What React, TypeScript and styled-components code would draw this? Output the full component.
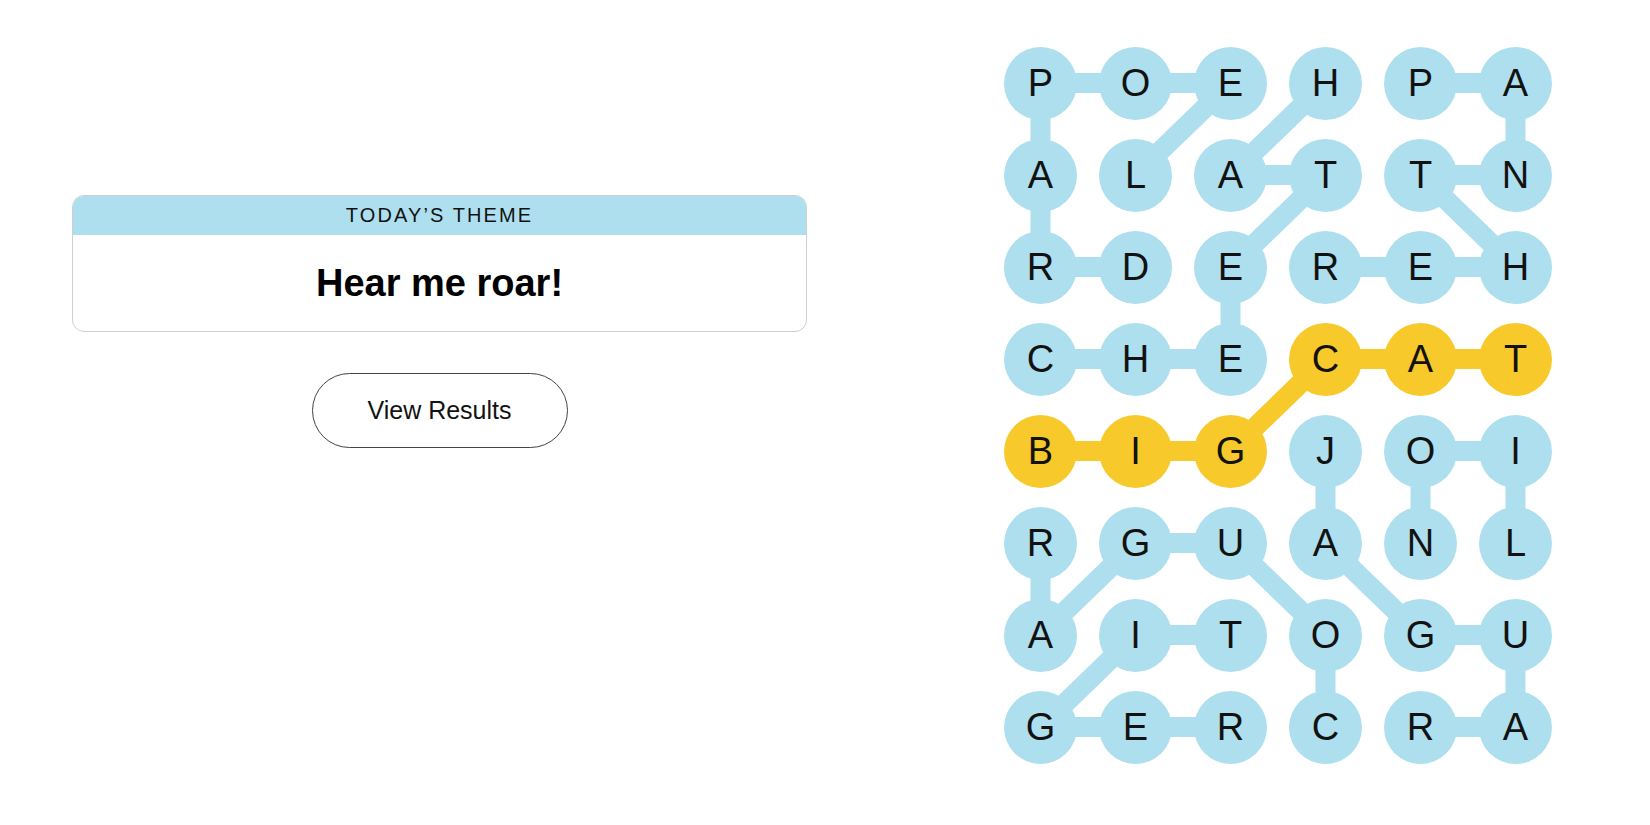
import React from "react";
import styled, { createGlobalStyle } from "styled-components";

const GlobalStyle = createGlobalStyle`
  html, body { margin: 0; padding: 0; background: #ffffff; }
  body { font-family: "Liberation Sans", Arial, sans-serif; color: #121212; }
`;

const COL_W = 95;
const ROW_H = 92;
const BLUE = "#aedfee";
const YELLOW = "#f7c92a";

const GRID = ["POEHPA", "ALATTN", "RDEREH", "CHECAT", "BIGJOI", "RGUANL", "AITOGU", "GERCRA"];

type Cell = [number, number];
interface Word { name: string; path: Cell[]; spangram?: boolean }

const WORDS: Word[] = [
  { name: "LEOPARD", path: [[1, 1], [0, 2], [0, 1], [0, 0], [1, 0], [2, 0], [2, 1]] },
  { name: "CHEETAH", path: [[3, 0], [3, 1], [3, 2], [2, 2], [1, 3], [1, 2], [0, 3]] },
  { name: "PANTHER", path: [[0, 4], [0, 5], [1, 5], [1, 4], [2, 5], [2, 4], [2, 3]] },
  { name: "BIGCAT", path: [[4, 0], [4, 1], [4, 2], [3, 3], [3, 4], [3, 5]], spangram: true },
  { name: "JAGUAR", path: [[4, 3], [5, 3], [6, 4], [6, 5], [7, 5], [7, 4]] },
  { name: "LION", path: [[5, 5], [4, 5], [4, 4], [5, 4]] },
  { name: "COUGAR", path: [[7, 3], [6, 3], [5, 2], [5, 1], [6, 0], [5, 0]] },
  { name: "TIGER", path: [[6, 2], [6, 1], [7, 0], [7, 1], [7, 2]] },
];

const spangramCells = new Set(
  WORDS.filter((w) => w.spangram).flatMap((w) => w.path.map(([r, c]) => `${r}-${c}`))
);

const Page = styled.main`
  display: flex;
  align-items: flex-start;
  padding-left: 72px;
  min-height: 825px;
  box-sizing: border-box;
`;

const LeftPanel = styled.section`
  width: 735px;
  padding-top: 195px;
  display: flex;
  flex-direction: column;
  align-items: center;
  gap: 41px;
`;

const ThemeCard = styled.div`
  width: 100%;
  box-sizing: border-box;
  border: 1px solid #cfcfcf;
  border-radius: 12px;
  overflow: hidden;
  display: flex;
  flex-direction: column;
`;

const ThemeHeader = styled.div`
  height: 39px;
  background: ${BLUE};
  display: flex;
  align-items: center;
  justify-content: center;
  font-size: 20px;
  letter-spacing: 2.1px;
  text-transform: uppercase;
  color: #121212;
`;

const ThemeBody = styled.div`
  height: 96px;
  display: flex;
  align-items: center;
  justify-content: center;
  font-size: 38px;
  font-weight: 700;
  color: #000;
`;

const ResultsButton = styled.button`
  width: 256px;
  height: 75px;
  border: 1px solid #444;
  border-radius: 40px;
  background: #fff;
  font-family: "Liberation Sans", Arial, sans-serif;
  font-size: 25px;
  color: #121212;
  cursor: pointer;
`;

const Board = styled.div`
  position: relative;
  margin-left: 186px;
  margin-top: 37px;
  width: ${COL_W * 6}px;
  height: ${ROW_H * 8}px;
`;

const Lines = styled.svg`
  position: absolute;
  inset: 0;
  z-index: 0;
`;

const LetterGrid = styled.div`
  position: relative;
  z-index: 1;
  display: grid;
  grid-template-columns: repeat(6, ${COL_W}px);
  grid-template-rows: repeat(8, ${ROW_H}px);
`;

const Letter = styled.div<{ $found: boolean }>`
  width: 73px;
  height: 73px;
  border-radius: 50%;
  background: ${(p) => (p.$found ? YELLOW : BLUE)};
  place-self: center;
  display: flex;
  align-items: center;
  justify-content: center;
  font-size: 38px;
  font-weight: 400;
  color: #121212;
  line-height: 1;
`;

const center = ([r, c]: Cell) => `${c * COL_W + COL_W / 2},${r * ROW_H + ROW_H / 2}`;

export default function App() {
  return (
    <>
      <GlobalStyle />
      <Page>
        <LeftPanel>
          <ThemeCard>
            <ThemeHeader>Today’s Theme</ThemeHeader>
            <ThemeBody>Hear me roar!</ThemeBody>
          </ThemeCard>
          <ResultsButton>View Results</ResultsButton>
        </LeftPanel>
        <Board>
          <Lines width={COL_W * 6} height={ROW_H * 8}>
            {WORDS.map((w) => (
              <polyline
                key={w.name}
                points={w.path.map(center).join(" ")}
                fill="none"
                stroke={w.spangram ? YELLOW : BLUE}
                strokeWidth={20}
                strokeLinejoin="round"
                strokeLinecap="round"
              />
            ))}
          </Lines>
          <LetterGrid>
            {GRID.flatMap((row, r) =>
              row.split("").map((ch, c) => (
                <Letter key={`${r}-${c}`} $found={spangramCells.has(`${r}-${c}`)}>
                  {ch}
                </Letter>
              ))
            )}
          </LetterGrid>
        </Board>
      </Page>
    </>
  );
}
